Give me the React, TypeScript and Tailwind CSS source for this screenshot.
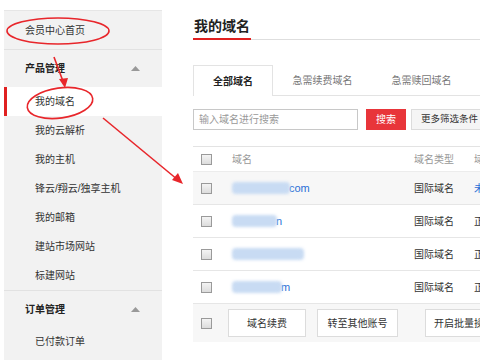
import React from "react";

const FONT = { fontFamily: '"Liberation Sans", "Noto Sans CJK SC", sans-serif' };

const MENU = ["我的域名", "我的云解析", "我的主机", "锋云/翔云/独享主机", "我的邮箱", "建站市场网站", "标建网站"];

const ROWS = [
  { blur: 58, tail: "com", status: "未", statusBlue: true, hover: true },
  { blur: 45, tail: "n", status: "正", statusBlue: false, hover: false },
  { blur: 72, tail: "", status: "正", statusBlue: false, hover: false },
  { blur: 50, tail: "m", status: "正", statusBlue: false, hover: false },
];

function Caret() {
  return (
    <svg width="9" height="5" viewBox="0 0 9 5" className="mr-[22px]">
      <path d="M0 5 L4.5 0 L9 5 Z" fill="#999" />
    </svg>
  );
}

function Check() {
  return (
    <span className="block w-[11px] h-[11px] border border-[#9a9a9a] bg-gradient-to-b from-[#f4f4f4] to-[#dcdcdc]" />
  );
}

function Sidebar() {
  return (
    <div className="mt-[10px] ml-[4px] w-[158px] shrink-0 h-[360px] bg-[#f2f2f2] border-t border-[#e6e6e6] text-[10px] text-[#333] whitespace-nowrap">
      <div className="h-[38px] flex items-center pl-[21px]">会员中心首页</div>
      <div className="h-px bg-[#e2e2e2]" />
      <div className="h-[37px] flex items-center justify-between pl-[21px] font-bold text-[#222]">
        产品管理
        <Caret />
      </div>
      {MENU.map((m, i) => (
        <div
          key={m}
          className={`h-[29px] flex items-center ${i === 0 ? "bg-white border-l-[3px] border-[#e02020] pl-[28px] -mr-px" : "pl-[31px]"}`}
        >
          {m}
        </div>
      ))}
      <div className="h-px bg-[#e2e2e2]" />
      <div className="h-[36px] flex items-center justify-between pl-[21px] font-bold text-[#222]">
        订单管理
        <Caret />
      </div>
      <div className="h-[29px] flex items-center pl-[31px]">已付款订单</div>
    </div>
  );
}

function Main() {
  return (
    <div className="ml-[31px] w-[400px] shrink-0 text-[10px] text-[#333] whitespace-nowrap">
      <div className="pt-[18px] relative">
        <div className="text-[14px] font-bold text-[#222] leading-[16px] pl-px">我的域名</div>
        <div className="mt-[5px] h-px bg-[#dedede]" />
        <div className="absolute left-0 bottom-0 w-[58px] h-[2px] bg-[#e02020]" />
      </div>

      <div className="mt-[25px] flex h-[31px] items-end">
        <div className="w-[80px] h-[31px] border border-b-0 border-[#e3e3e3] bg-white flex items-center justify-center font-bold text-[#222]">
          全部域名
        </div>
        <div className="flex-1 h-full flex border-b border-[#e3e3e3] text-[#777]">
          <div className="w-[99px] flex items-center justify-center">急需续费域名</div>
          <div className="w-[99px] flex items-center justify-center">急需赎回域名</div>
        </div>
      </div>

      <div className="mt-[13px] flex items-center h-[21px]">
        <div className="w-[165px] h-[21px] border border-[#c8c8c8] flex items-center pl-[5px] text-[#999]">
          输入域名进行搜索
        </div>
        <div className="ml-[8px] w-[40px] h-[21px] bg-[#e8353a] text-white flex items-center justify-center">搜索</div>
        <div className="ml-[5px] w-[90px] h-[21px] bg-[#f5f5f5] border border-[#dcdcdc] flex items-center pl-[9px] text-[9.5px] text-[#333]">
          更多筛选条件
        </div>
      </div>

      <div className="mt-[16px] border-t border-[#e3e3e3]">
        <div className="h-[25px] flex items-center border-b border-[#ececec] text-[#999]">
          <div className="w-[39px] pl-[8px]"><Check /></div>
          <div className="w-[182px]">域名</div>
          <div className="w-[60px]">域名类型</div>
          <div>域</div>
        </div>
        {ROWS.map((r, i) => (
          <div
            key={i}
            className={`h-[33px] flex items-center border-b border-[#e6e6e6] ${r.hover ? "bg-[#f7f7f7]" : ""}`}
          >
            <div className="w-[39px] pl-[8px]"><Check /></div>
            <div className="w-[182px] flex items-center">
              <span
                className="h-[12px] rounded-sm bg-[#c8dbf3] blur-[1.5px]"
                style={{ width: r.blur }}
              />
              <span className="text-[11px] text-[#2a6fd6] -ml-px">{r.tail}</span>
            </div>
            <div className="w-[60px]">国际域名</div>
            <div className={r.statusBlue ? "text-[#2a6fd6]" : "text-[#333]"}>{r.status}</div>
          </div>
        ))}
        <div className="h-[38px] flex items-center bg-[#f7f7f7]">
          <div className="w-[35px] pl-[8px]"><Check /></div>
          <div className="w-[78px] h-[28px] bg-white border border-[#dcdcdc] flex items-center justify-center">域名续费</div>
          <div className="ml-[11px] w-[81px] h-[28px] bg-white border border-[#dcdcdc] flex items-center justify-center">转至其他账号</div>
          <div className="ml-[27px] w-[80px] h-[28px] bg-white border border-[#dcdcdc] flex items-center pl-[8px]">开启批量操作</div>
        </div>
      </div>
    </div>
  );
}

function Marks() {
  return (
    <svg className="absolute inset-0 pointer-events-none" width="480" height="360" viewBox="0 0 480 360">
      <g stroke="#e8262b" strokeWidth="1.6" fill="none">
        <ellipse cx="58" cy="31" rx="51" ry="13" />
        <ellipse cx="60" cy="103" rx="33" ry="15" transform="rotate(-8 60 103)" />
        <line x1="54" y1="57" x2="64" y2="84" />
        <line x1="103" y1="118" x2="178" y2="180" />
      </g>
      <path d="M65 88 L59 79 L68 78 Z" fill="#e8262b" />
      <path d="M183 184 L172 180 L178 173 Z" fill="#e8262b" />
    </svg>
  );
}

export default function App() {
  return (
    <div className="relative w-[480px] h-[360px] overflow-hidden bg-white flex" style={FONT}>
      <Sidebar />
      <Main />
      <Marks />
    </div>
  );
}
